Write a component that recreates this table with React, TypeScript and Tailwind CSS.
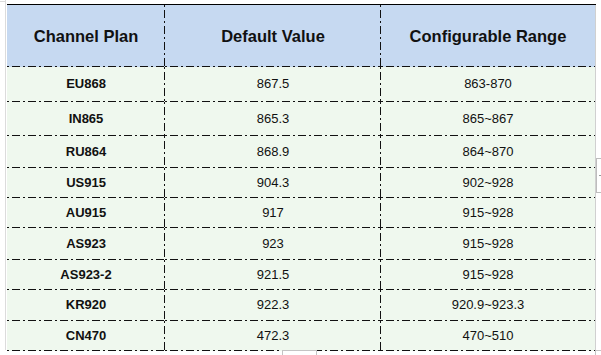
const rows = [
  { plan: "EU868", value: "867.5", range: "863-870", h: "h-[35px]" },
  { plan: "IN865", value: "865.3", range: "865~867", h: "h-[34px]" },
  { plan: "RU864", value: "868.9", range: "864~870", h: "h-[32px]" },
  { plan: "US915", value: "904.3", range: "902~928", h: "h-[30px]" },
  { plan: "AU915", value: "917", range: "915~928", h: "h-[30px]" },
  { plan: "AS923", value: "923", range: "915~928", h: "h-[32px]" },
  { plan: "AS923-2", value: "921.5", range: "915~928", h: "h-[30px]" },
  { plan: "KR920", value: "922.3", range: "920.9~923.3", h: "h-[31px]" },
  { plan: "CN470", value: "472.3", range: "470~510", h: "h-[30px]" },
];

// dash-dot rules along the bottom and the right edge of a cell
const lineBR =
  "bg-[image:repeating-linear-gradient(90deg,#111_0_2px,transparent_2px_5px,#111_5px_13px,transparent_13px_16px),repeating-linear-gradient(180deg,#111_0_2px,transparent_2px_5px,#111_5px_13px,transparent_13px_16px)] bg-size-[100%_1px,1px_100%] bg-position-[left_bottom,right_top] bg-no-repeat";
const lineB =
  "bg-[image:repeating-linear-gradient(90deg,#111_0_2px,transparent_2px_5px,#111_5px_13px,transparent_13px_16px)] bg-size-[100%_1px] bg-position-[left_bottom] bg-no-repeat";

export default function App() {
  return (
    <div className="relative w-[601px] h-[355px] bg-white overflow-hidden font-['Liberation_Sans',Arial,sans-serif] text-[#111]">
      {/* page margin guide */}
      <div className="absolute left-[5px] top-0 w-px h-[350px] bg-[#dcdcdc]" />
      <div className="absolute left-0 top-[1px] w-[5px] h-px bg-[#dcdcdc]" />

      <div className="pl-[7px] pt-[4px]">
        <div className="w-[589px] border-t border-black">
          <div className="flex h-[62px] bg-[#c6d9f1] text-[16.5px] font-bold">
            <div className={`w-[158px] flex items-center justify-center ${lineBR}`}>Channel Plan</div>
            <div className={`w-[216px] flex items-center justify-center ${lineBR}`}>Default Value</div>
            <div className={`w-[215px] flex items-center justify-center border-r border-[#d0d0d0] ${lineB}`}>
              Configurable Range
            </div>
          </div>
          {rows.map((r) => (
            <div key={r.plan} className={`flex ${r.h} bg-[#eff8ee] text-[13px]`}>
              <div className={`w-[158px] flex items-center justify-center pb-px font-bold ${lineBR}`}>{r.plan}</div>
              <div className={`w-[216px] flex items-center justify-center pb-px ${lineBR}`}>{r.value}</div>
              <div className={`w-[215px] flex items-center justify-center pb-px border-r border-[#d0d0d0] ${lineB}`}>
                {r.range}
              </div>
            </div>
          ))}
        </div>
      </div>

      {/* editor handles */}
      <div className="absolute left-[596px] top-[158px] w-[8px] h-[35px] border border-[#bdbdbd] bg-white">
        <div className="mt-[16px] ml-[2px] w-[3px] h-px bg-[#999]" />
      </div>
      <div className="absolute left-[282px] top-[350px] w-[35px] h-[8px] border border-[#c4c4c4] bg-white" />
      <div className="absolute left-[595px] top-[350px] w-[8px] h-[8px] border border-[#c4c4c4] bg-white" />
    </div>
  );
}
